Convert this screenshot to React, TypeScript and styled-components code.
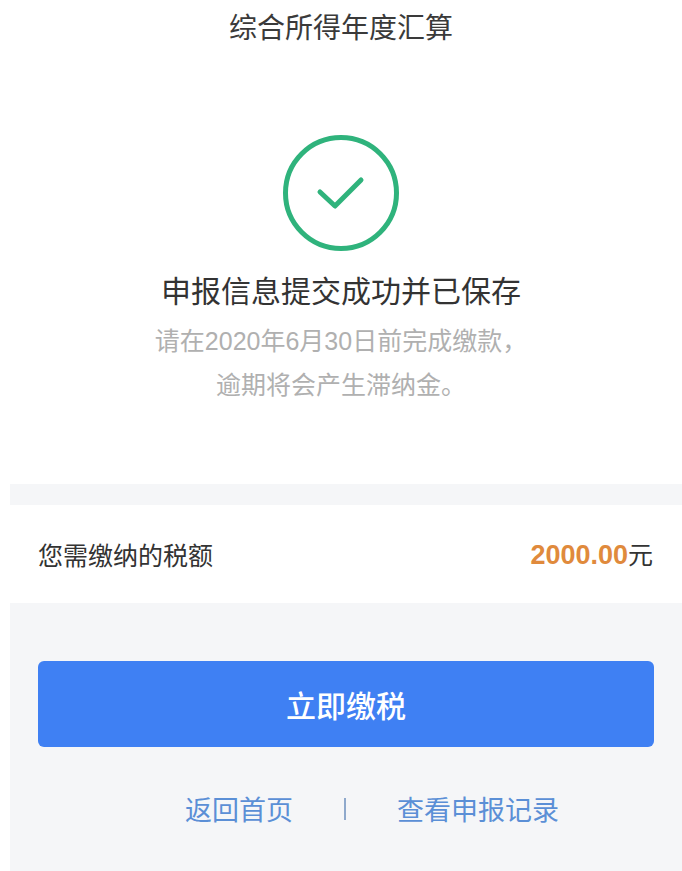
import React from "react";
import styled, { createGlobalStyle } from "styled-components";

const Global = createGlobalStyle`
  html, body { margin: 0; padding: 0; background: #ffffff; }
  * { box-sizing: border-box; }
`;

const FONT = `"Noto Sans CJK SC", "Liberation Sans", sans-serif`;

const Page = styled.div`
  width: 682px;
  height: 871px;
  overflow: hidden;
  display: flex;
  flex-direction: column;
  font-family: "Liberation Sans", "Noto Sans CJK SC", sans-serif;
`;

const Top = styled.section`
  height: 484px;
  display: flex;
  flex-direction: column;
  align-items: center;
  background: #fff;
`;

const Title = styled.h1`
  margin: 6px 0 0;
  font: 400 28px/40px ${FONT};
  color: #3a3a3a;
`;

const Badge = styled.svg`
  margin-top: 88px;
  width: 118px;
  height: 118px;
`;

const Headline = styled.h2`
  margin: 15px 0 0;
  font: 400 30px/44px ${FONT};
  color: #333;
`;

const Hint = styled.p`
  margin: 8px 0 0;
  font: 400 25px/44px "Liberation Sans", "Noto Sans CJK SC", sans-serif;
  color: #b0b0b0;
  text-align: center;
`;

const Lower = styled.section`
  flex: 1;
  margin-left: 10px;
  background: #f5f6f8;
  display: flex;
  flex-direction: column;
`;

const AmountRow = styled.div`
  margin-top: 21px;
  height: 98px;
  padding: 0 29px 0 28px;
  background: #fff;
  display: flex;
  align-items: center;
  justify-content: space-between;
`;

const AmountLabel = styled.span`
  font: 400 25px/36px ${FONT};
  color: #333;
`;

const Amount = styled.span`
  font: 400 25px/36px ${FONT};
  color: #333;
`;

const Figure = styled.b`
  font: 700 27px/36px "Liberation Sans", sans-serif;
  color: #e08a3c;
`;

const PayButton = styled.button`
  margin: 58px 28px 0;
  height: 86px;
  border: 0;
  border-radius: 6px;
  background: #3f80f3;
  color: #fff;
  font: 500 30px/40px ${FONT};
`;

const Links = styled.div`
  margin-top: 42px;
  display: flex;
  align-items: center;
  padding-left: 175px;
  color: #5b8fd6;
`;

const LinkText = styled.a`
  font: 400 27px/40px ${FONT};
  color: #5b8fd6;
`;

const Sep = styled.span`
  width: 2px;
  height: 22px;
  margin: 0 51px;
  background: #8fa9cc;
`;

export default function App() {
  return (
    <Page>
      <Global />
      <Top>
        <Title>综合所得年度汇算</Title>
        <Badge viewBox="0 0 118 118" fill="none">
          <circle cx="59" cy="59" r="55.5" stroke="#2fb37c" strokeWidth="5" />
          <path d="M38 58 L53 72 L79 46" stroke="#2fb37c" strokeWidth="5" strokeLinecap="round" strokeLinejoin="round" />
        </Badge>
        <Headline>申报信息提交成功并已保存</Headline>
        <Hint>
          请在2020年6月30日前完成缴款，
          <br />
          逾期将会产生滞纳金。
        </Hint>
      </Top>
      <Lower>
        <AmountRow>
          <AmountLabel>您需缴纳的税额</AmountLabel>
          <Amount>
            <Figure>2000.00</Figure>元
          </Amount>
        </AmountRow>
        <PayButton>立即缴税</PayButton>
        <Links>
          <LinkText>返回首页</LinkText>
          <Sep />
          <LinkText>查看申报记录</LinkText>
        </Links>
      </Lower>
    </Page>
  );
}
